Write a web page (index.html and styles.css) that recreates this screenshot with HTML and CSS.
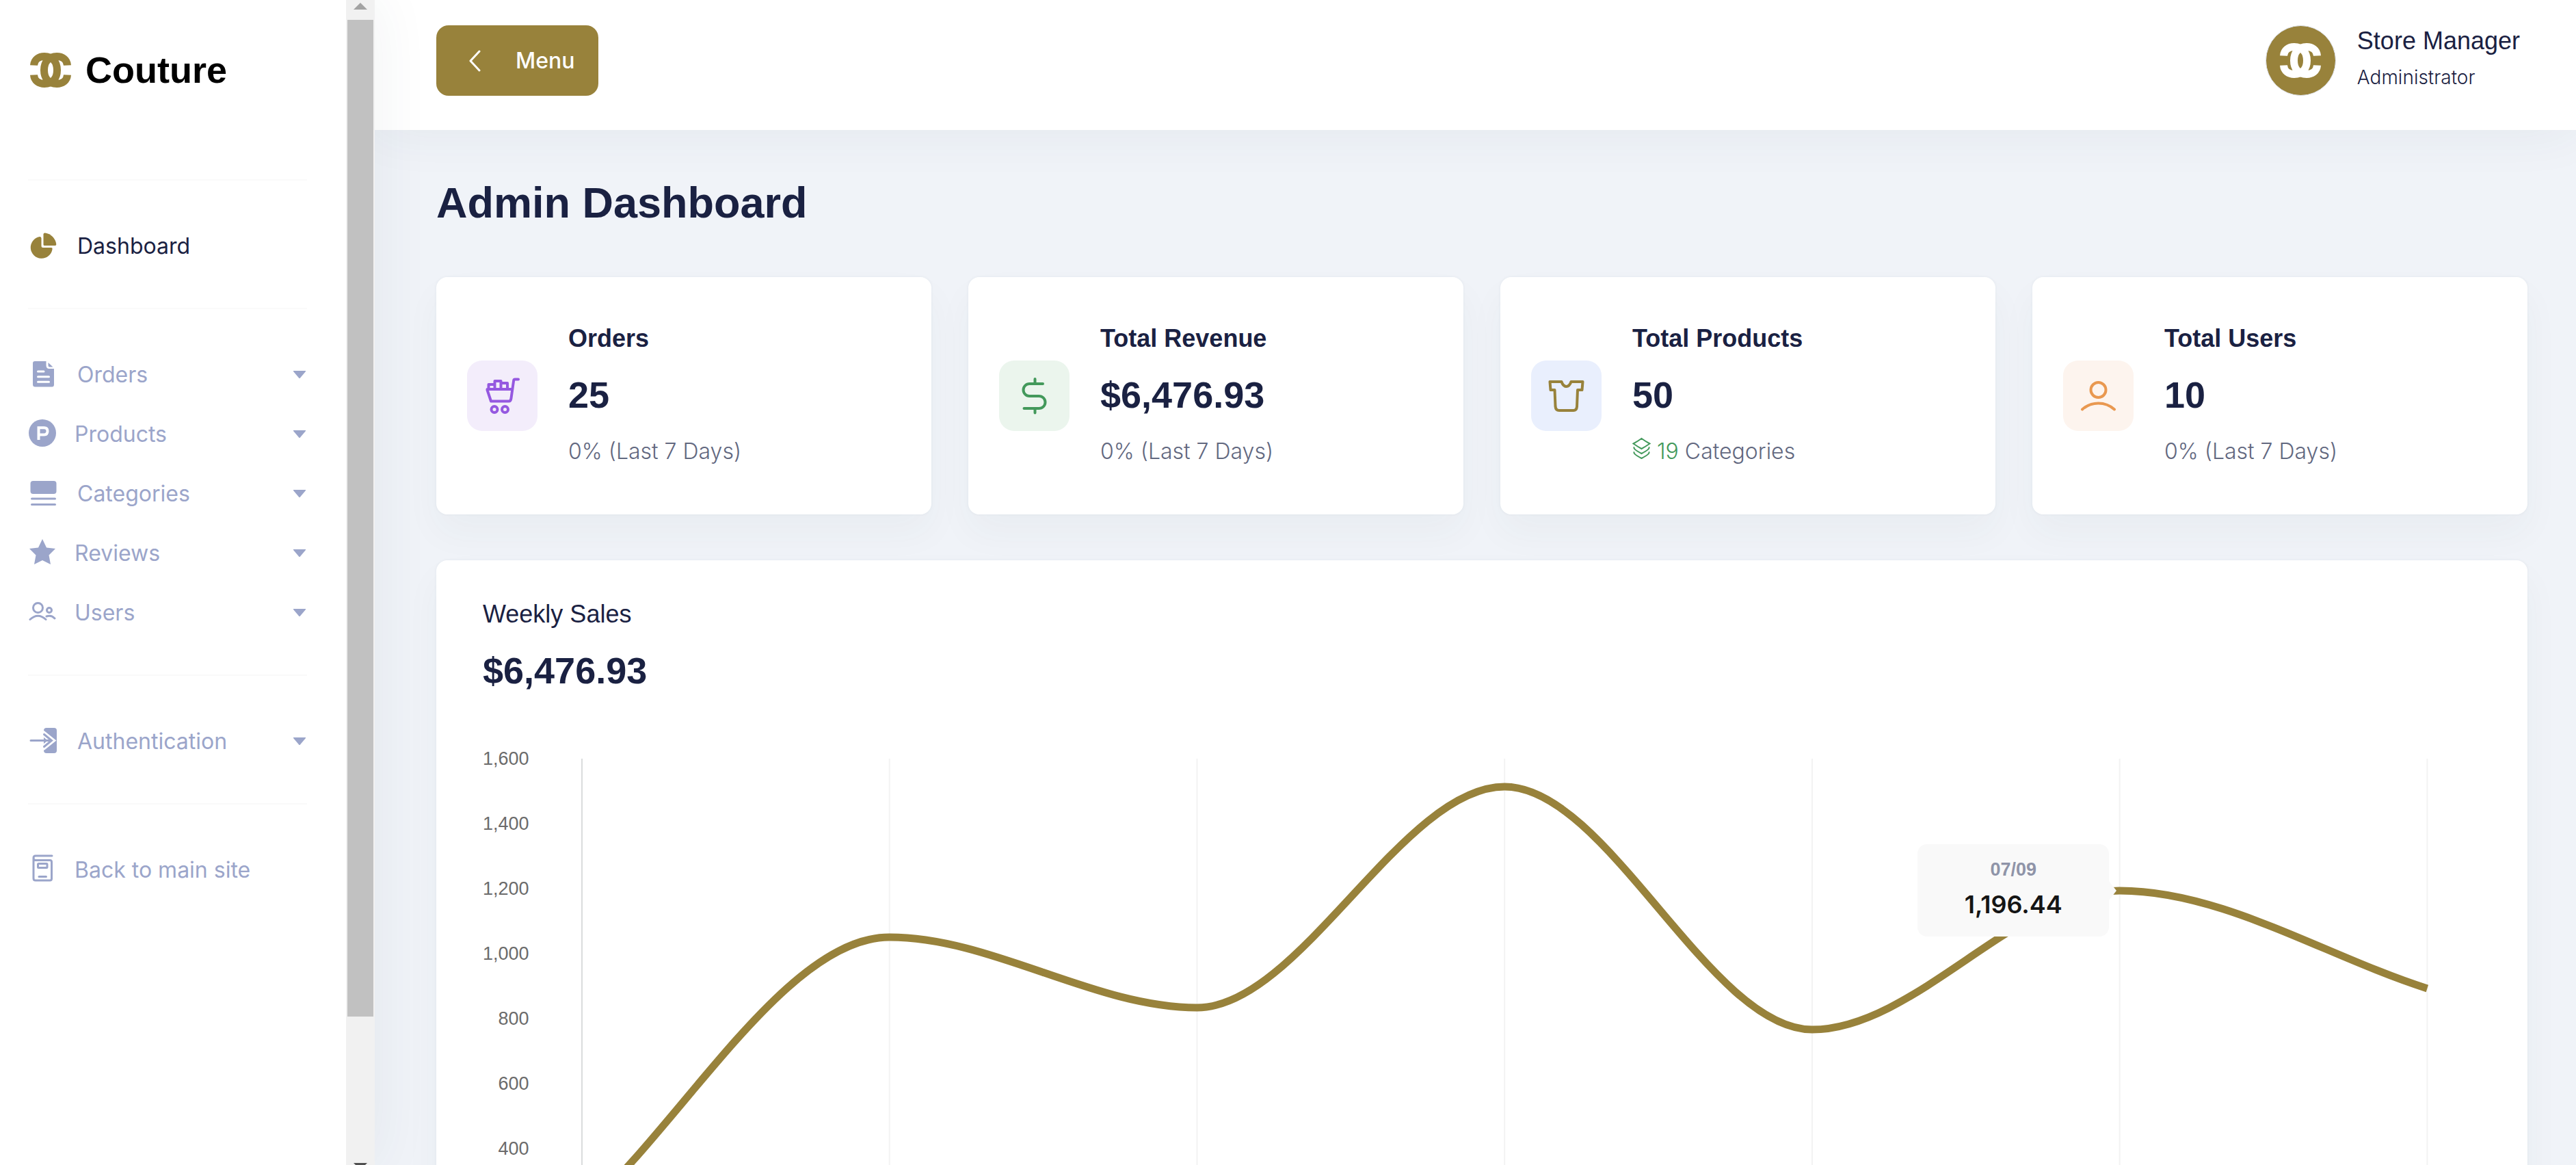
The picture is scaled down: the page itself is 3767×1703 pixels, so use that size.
FILE: index.html
```html
<!DOCTYPE html>
<html lang="en">
<head>
<meta charset="utf-8">
<meta name="viewport" content="width=device-width, initial-scale=1">
<title>Couture - Admin Dashboard</title>
<link rel="stylesheet" href="styles.css">
</head>
<body>
<svg class="sprite" aria-hidden="true">
  <symbol id="monogram" viewBox="0 0 60 51">
    <g fill="none" stroke="currentColor" stroke-width="11">
      <path d="M5.5 18.500C6 10 13 5.500 21 5.500C33 5.500 39.500 14 39.500 25.500S33 45.500 21 45.500C13 45.500 6 41 5.500 32.500"/>
      <path d="M54.500 18.500C54 10 47 5.500 39 5.500C27 5.500 20.500 14 20.500 25.500S27 45.500 39 45.500C47 45.500 54 41 54.500 32.500"/>
    </g>
  </symbol>
  <symbol id="caret" viewBox="0 0 18 11"><path d="M0 0H18V1L9.500 11H8.500L0 1Z" fill="currentColor"/></symbol>
</svg>
<div class="app">
  <aside class="sidebar">
    <nav class="nav" aria-label="Main">
      <a class="brand" href="#"><svg class="brand-mark"><use href="#monogram"/></svg><span>Couture</span></a>
      <ul class="nav-group">
        <li><a class="nav-link active" href="#">
          <svg class="nav-icon" viewBox="0 0 45 45" fill="currentColor"><path d="M19.500 11.500V22.500Q19.500 25 22 25H34Q36 25 35.600 27A16 16 0 1 1 17 9Q19.500 8.700 19.500 11.500Z"/><path d="M22.500 5.500Q22.500 3.300 25 3.500A19 19 0 0 1 41.300 20Q41.500 22 39.500 22H24Q22.500 22 22.500 20.500Z"/></svg>
          <span>Dashboard</span></a></li>
      </ul>
      <ul class="nav-group">
        <li><a class="nav-link" href="#">
          <svg class="nav-icon" viewBox="0 0 45 45"><path fill="currentColor" d="M10 3H26.500V9Q26.500 14 31 14H38V37Q38 40.500 35 40.500H10.500Q7 40.500 7 37V6Q7 3 10 3ZM29.500 5L36.500 11.500H31.500Q29.500 11.500 29.500 9Z"/><path d="M14.500 18H23M14.500 25.700H30.500M14.500 33.200H30.500" stroke="#fff" stroke-width="3" stroke-linecap="round"/></svg>
          <span>Orders</span><svg class="caret"><use href="#caret"/></svg></a></li>
        <li><a class="nav-link" href="#">
          <svg class="nav-icon nav-icon-sm" viewBox="0 0 41 45"><circle cx="21" cy="21" r="20" fill="currentColor"/><path d="M15.500 31V13.300H23.500Q28.500 13.300 28.500 18.300T23.500 23.500H15.500" fill="none" stroke="#fff" stroke-width="4"/></svg>
          <span>Products</span><svg class="caret"><use href="#caret"/></svg></a></li>
        <li><a class="nav-link" href="#">
          <svg class="nav-icon" viewBox="0 0 45 45" fill="currentColor"><rect x="3.500" y="4" width="38" height="19" rx="4"/><rect x="4" y="28.500" width="37" height="3" rx="1.500"/><rect x="4" y="37" width="37" height="3" rx="1.500"/></svg>
          <span>Categories</span><svg class="caret"><use href="#caret"/></svg></a></li>
        <li><a class="nav-link" href="#">
          <svg class="nav-icon nav-icon-sm" viewBox="0 0 41 45"><path fill="currentColor" d="M21 2L27 14.500L40 16L30.500 25.500L33 39L21 33L9 39L11.500 25.500L2 16L15 14.500Z"/></svg>
          <span>Reviews</span><svg class="caret"><use href="#caret"/></svg></a></li>
        <li><a class="nav-link" href="#">
          <svg class="nav-icon nav-icon-sm" viewBox="0 0 41 45" fill="none" stroke="currentColor" stroke-width="3" stroke-linecap="round"><circle cx="14.500" cy="15.500" r="7"/><circle cx="31" cy="19" r="3.500"/><path d="M3 32.500Q14.500 22 26 32.500M27 28Q34 25.500 39 31"/></svg>
          <span>Users</span><svg class="caret"><use href="#caret"/></svg></a></li>
      </ul>
      <ul class="nav-group">
        <li><a class="nav-link" href="#">
          <svg class="nav-icon" viewBox="0 0 45 45" fill="none" stroke-linecap="round"><rect x="23" y="3" width="19" height="37" rx="4" fill="currentColor"/><path d="M22 11L35 21.500L22 32" stroke="#fff" stroke-width="8"/><path d="M4 21.500H34M23.500 12.500L34.500 21.500L23.500 30.500" stroke="currentColor" stroke-width="3"/></svg>
          <span>Authentication</span><svg class="caret"><use href="#caret"/></svg></a></li>
      </ul>
      <ul class="nav-group">
        <li><a class="nav-link" href="#">
          <svg class="nav-icon nav-icon-sm" viewBox="0 0 41 45" fill="none" stroke="currentColor" stroke-width="3" stroke-linecap="round" stroke-linejoin="round"><path d="M35 2H11Q8 2 8 5V35Q8 38 11 38H32Q34.500 38 34.500 35.500V11Q34.500 8.500 32 8.500H11Q8 8.500 8 5"/><rect x="14.500" y="13.500" width="13.500" height="6" rx="1"/><path d="M16 32.500H26.500"/></svg>
          <span>Back to main site</span></a></li>
      </ul>
    </nav>
    <div class="scroll-rail" aria-hidden="true">
      <svg class="rail-up" viewBox="0 0 42 29"><path d="M21 4L31 14H11Z" fill="#a3a3a3"/></svg>
      <div class="rail-track"><div class="rail-thumb"></div></div>
      <svg class="rail-down" viewBox="0 0 42 13"><path d="M11 10H31L21 20Z" fill="#505050"/></svg>
    </div>
  </aside>

  <div class="page">
    <header class="topbar">
      <button class="menu-button" type="button">
        <svg class="menu-chevron" viewBox="0 0 20 32"><path d="M17 2L4 16L17 30" fill="none" stroke="#fff" stroke-width="3" stroke-linecap="round" stroke-linejoin="round"/></svg>
        <span>Menu</span>
      </button>
      <div class="profile">
        <div class="avatar"><svg class="avatar-mark"><use href="#monogram"/></svg></div>
        <div class="profile-text">
          <div class="profile-name">Store Manager</div>
          <div class="profile-role">Administrator</div>
        </div>
      </div>
    </header>

    <main class="content">
      <h1>Admin Dashboard</h1>
      <section class="stats">
        <article class="card stat">
          <svg class="stat-icon purple" viewBox="0 0 103 103"><path d="M75 27.500H70Q68.500 27.500 68.200 29L64.500 55Q64 59.500 61 59.500H35L29.500 43V42H65.500M31.500 42V35H40.500M40.500 42V30H49.500V42M49.500 33H59V42"/><circle cx="40" cy="71.500" r="4.500"/><circle cx="55.500" cy="71.500" r="4.500"/></svg>
          <div class="stat-text"><h2>Orders</h2><p class="amount">25</p><p class="note">0% (Last 7 Days)</p></div>
        </article>
        <article class="card stat">
          <svg class="stat-icon green" viewBox="0 0 103 103"><path d="M52.500 27V34M64 34H44.500A9 9 0 0 0 44.500 52H58.500A9 9 0 0 1 58.500 70H36.500M52.500 70V76.500"/></svg>
          <div class="stat-text"><h2>Total Revenue</h2><p class="amount">$6,476.93</p><p class="note">0% (Last 7 Days)</p></div>
        </article>
        <article class="card stat">
          <svg class="stat-icon blue" viewBox="0 0 103 103"><path d="M27.500 31H44.500Q47 38 51.500 38T58.500 31H75.500L74.500 43H68L67 67.500Q66.500 73 62 73H41Q36 73 35.500 67L34.500 43H28.500Z"/></svg>
          <div class="stat-text"><h2>Total Products</h2><p class="amount">50</p><p class="note"><span class="good"><svg class="layers" viewBox="0 0 27 32"><path d="M13.500 2Q19 6 25.500 9.500Q19 14 13.500 17Q8 14 1.500 9.500Q8 6 13.500 2ZM3 14.500Q0 17 13.500 24Q27 17 24 14.500M3 21.500Q0 24 13.500 31Q27 24 24 21.500"/></svg>19</span> Categories</p></div>
        </article>
        <article class="card stat">
          <svg class="stat-icon orange" viewBox="0 0 103 103"><circle cx="51.500" cy="43" r="11"/><path d="M28 71.500Q38 62.500 51.500 62.500T75 71.500"/></svg>
          <div class="stat-text"><h2>Total Users</h2><p class="amount">10</p><p class="note">0% (Last 7 Days)</p></div>
        </article>
      </section>

      <section class="card sales">
        <h2 class="sales-title">Weekly Sales</h2>
        <p class="amount">$6,476.93</p>
        <div class="chart">
          <ol class="scale"><li>1,600</li><li>1,400</li><li>1,200</li><li>1,000</li><li>800</li><li>600</li><li>400</li></ol>
          <div class="plot">
            <svg class="plot-svg" viewBox="0 0 2700 760" preserveAspectRatio="none" role="img" aria-label="Weekly sales">
              <path class="grid" d="M450 0V760M900 0V760M1350 0V760M1800 0V760M2250 0V760M2700 0V760"/>
              <path class="axis" d="M0 0V760"/>
              <path class="line" d="M0 664C150 529 300 261 450 261S750 364 900 364S1200 41 1350 41S1650 396 1800 396S2100 193 2250 193S2550 288 2700 336"/>
            </svg>
            <div class="tooltip"><div class="tip-date">07/09</div><div class="tip-value">1,196.44</div></div>
          </div>
        </div>
      </section>
    </main>
  </div>
</div>
</body>
</html>
```
FILE: styles.css
```css
* { box-sizing: border-box; }

body {
  margin: 0;
  background: #f0f3f8;
  color: #1a2142;
  font-family: "Liberation Sans", Arial, sans-serif;
}

h1, h2, p, ul, ol { margin: 0; padding: 0; }
ul, ol { list-style: none; }
a { color: inherit; text-decoration: none; }

.sprite { position: absolute; width: 0; height: 0; }

.app { display: flex; height: 100vh; overflow: hidden; }

/* Sidebar */
.sidebar {
  position: relative;
  z-index: 2;
  display: flex;
  flex: 0 0 548px;
  background: #fff;
  box-shadow: 0 0 80px rgba(40, 70, 80, 0.07);
}

.nav { flex: 1; padding: 0 57px 0 41px; }

.brand {
  display: flex;
  align-items: center;
  gap: 21px;
  height: 204px;
  margin-bottom: 58px;
  padding-left: 3px;
  color: #000;
  font-size: 54px;
  font-weight: 700;
  line-height: 64px;
}

.brand-mark { width: 60px; height: 51px; color: #98823b; }

.nav-group { padding: 52px 0 47px; border-top: 2px solid #fafafa; }

.nav-link {
  display: flex;
  align-items: center;
  height: 87px;
  color: #9ba5ca;
  font: 400 32px/40px Inter, sans-serif;
}

.nav-link.active { color: #1a2142; }
.nav-link.active .nav-icon { color: #98823b; }
.nav-icon { flex: none; width: 45px; height: 45px; margin-right: 27px; }
.nav-icon-sm { width: 41px; }
.caret { width: 18px; height: 11px; margin: 0 2px 0 auto; }

.scroll-rail { display: flex; flex-direction: column; width: 42px; background: #f1f1f1; }
.rail-up { height: 29px; }
.rail-down { height: 13px; }
.rail-track { flex: 1; padding: 0 2px; }
.rail-thumb { height: calc(88% - 5px); background: #c1c1c1; }

/* Top bar */
.page { flex: 1; min-width: 0; }

.topbar {
  position: relative;
  z-index: 1;
  display: flex;
  justify-content: space-between;
  padding: 37px 82px 50px 90px;
  background: #fff;
  box-shadow: 0 0 80px rgba(40, 70, 80, 0.07);
}

.menu-button {
  display: flex;
  align-items: center;
  gap: 50px;
  height: 103px;
  padding: 0 34px 0 46px;
  border: 0;
  border-radius: 18px;
  background: #98823b;
  color: #fff;
  font: 500 32px/40px Inter, sans-serif;
}

.menu-chevron { width: 20px; height: 32px; }

.profile { display: flex; gap: 31px; }

.avatar {
  display: flex;
  align-items: center;
  justify-content: center;
  width: 103px;
  height: 103px;
  border: 1px solid #e1e6f2;
  border-radius: 50%;
  background: #98823b;
  color: #fff;
}

.avatar-mark { width: 60px; height: 51px; }
.profile-name { margin-bottom: 7px; font-size: 36px; line-height: 46px; }
.profile-role { font: 300 28px/46px Inter, sans-serif; }

/* Content */
.content { padding: 68px 71px 71px 90px; }
h1 { margin-bottom: 71px; font-size: 63px; line-height: 76px; }

.card {
  border-radius: 16px;
  background: #fff;
  box-shadow: 0 27px 54px rgba(40, 70, 80, 0.04), 0 0 4px rgba(40, 70, 80, 0.06);
}

.stats { display: grid; grid-template-columns: repeat(4, 1fr); gap: 54px; margin-bottom: 67px; }
.stat { display: flex; align-items: center; gap: 45px; padding: 68px 45px; }

.stat-icon {
  flex: none;
  width: 103px;
  height: 103px;
  border-radius: 22px;
  fill: none;
  stroke: currentColor;
  stroke-width: 4;
  stroke-linecap: round;
  stroke-linejoin: round;
}

.purple { background: #f3edfb; color: #9558e0; }
.green { background: #ebf5ed; color: #43995b; }
.blue { background: #e9effd; color: #98823b; }
.orange { background: #fdf4ee; color: #e99850; }

h2 { font-size: 36px; line-height: 44px; }
.amount { margin-top: 27px; font-size: 54px; font-weight: 700; line-height: 66px; }
.note { margin-top: 26px; color: #62687f; font: 300 32px/48px Inter, sans-serif; }
.good { color: #43995b; }
.layers { width: 27px; height: 32px; margin-right: 9px; fill: none; stroke: currentColor; stroke-width: 2; }

/* Sales chart */
.sales { padding: 57px 147px 68px 68px; }
.sales-title { font-weight: 400; }
.chart { display: flex; gap: 77px; margin-top: 96px; }

.scale {
  margin-top: -47px;
  color: #6b6b6b;
  font-size: 27px;
  line-height: 95px;
  text-align: right;
}

.plot { position: relative; flex: 1; height: 760px; }
.plot-svg { display: block; width: 100%; height: 100%; overflow: visible; }
.plot-svg path { fill: none; vector-effect: non-scaling-stroke; }
.plot-svg .grid { stroke: #f3f3f3; stroke-width: 2; }
.plot-svg .axis { stroke: #dadcdd; stroke-width: 2; }
.plot-svg .line { stroke: #98823b; stroke-width: 11; }

.tooltip {
  position: absolute;
  top: 125px;
  right: calc(100% / 6 + 15px);
  width: 280px;
  height: 135px;
  padding: 23px 0;
  border-radius: 14px;
  background: #f9f9f9;
  text-align: center;
}

.tooltip::after {
  content: "";
  position: absolute;
  top: 54px;
  left: 100%;
  border: 14px solid transparent;
  border-right-width: 0;
  border-left: 11px solid #f9f9f9;
}

.tip-date { color: #8f94a8; font-size: 27px; font-weight: 700; line-height: 28px; }
.tip-value { margin-top: 15px; color: #151515; font: 600 36px/44px Inter, sans-serif; }
```
